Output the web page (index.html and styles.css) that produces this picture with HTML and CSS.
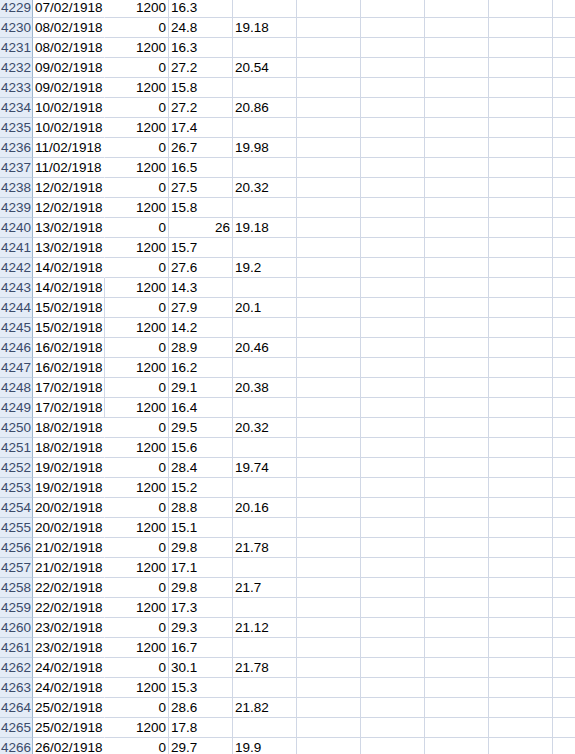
FILE: index.html
```html
<!DOCTYPE html>
<html>
<head>
    <meta charset="UTF-8">
    <title>Sheet1</title>
    <link rel="stylesheet" href="styles.css">
</head>
<body>
    <div class="sheet">
        <div class="row"><span class="hd">4229</span><span class="a">07/02/1918</span><span class="num">1200</span><span>16.3</span><span></span><span></span><span></span><span></span><span></span><span></span></div>
        <div class="row"><span class="hd">4230</span><span class="a">08/02/1918</span><span class="num">0</span><span>24.8</span><span>19.18</span><span></span><span></span><span></span><span></span><span></span></div>
        <div class="row"><span class="hd">4231</span><span class="a">08/02/1918</span><span class="num">1200</span><span>16.3</span><span></span><span></span><span></span><span></span><span></span><span></span></div>
        <div class="row"><span class="hd">4232</span><span class="a">09/02/1918</span><span class="num">0</span><span>27.2</span><span>20.54</span><span></span><span></span><span></span><span></span><span></span></div>
        <div class="row"><span class="hd">4233</span><span class="a">09/02/1918</span><span class="num">1200</span><span>15.8</span><span></span><span></span><span></span><span></span><span></span><span></span></div>
        <div class="row"><span class="hd">4234</span><span class="a">10/02/1918</span><span class="num">0</span><span>27.2</span><span>20.86</span><span></span><span></span><span></span><span></span><span></span></div>
        <div class="row"><span class="hd">4235</span><span class="a">10/02/1918</span><span class="num">1200</span><span>17.4</span><span></span><span></span><span></span><span></span><span></span><span></span></div>
        <div class="row"><span class="hd">4236</span><span class="a">11/02/1918</span><span class="num">0</span><span>26.7</span><span>19.98</span><span></span><span></span><span></span><span></span><span></span></div>
        <div class="row"><span class="hd">4237</span><span class="a">11/02/1918</span><span class="num">1200</span><span>16.5</span><span></span><span></span><span></span><span></span><span></span><span></span></div>
        <div class="row"><span class="hd">4238</span><span class="a">12/02/1918</span><span class="num">0</span><span>27.5</span><span>20.32</span><span></span><span></span><span></span><span></span><span></span></div>
        <div class="row"><span class="hd">4239</span><span class="a">12/02/1918</span><span class="num">1200</span><span>15.8</span><span></span><span></span><span></span><span></span><span></span><span></span></div>
        <div class="row"><span class="hd">4240</span><span class="a">13/02/1918</span><span class="num">0</span><span class="num">26</span><span>19.18</span><span></span><span></span><span></span><span></span><span></span></div>
        <div class="row"><span class="hd">4241</span><span class="a">13/02/1918</span><span class="num">1200</span><span>15.7</span><span></span><span></span><span></span><span></span><span></span><span></span></div>
        <div class="row"><span class="hd">4242</span><span class="a">14/02/1918</span><span class="num">0</span><span>27.6</span><span>19.2</span><span></span><span></span><span></span><span></span><span></span></div>
        <div class="row"><span class="hd">4243</span><span class="a ruled">14/02/1918</span><span class="num">1200</span><span>14.3</span><span></span><span></span><span></span><span></span><span></span><span></span></div>
        <div class="row"><span class="hd">4244</span><span class="a ruled">15/02/1918</span><span class="num">0</span><span>27.9</span><span>20.1</span><span></span><span></span><span></span><span></span><span></span></div>
        <div class="row"><span class="hd">4245</span><span class="a ruled">15/02/1918</span><span class="num">1200</span><span>14.2</span><span></span><span></span><span></span><span></span><span></span><span></span></div>
        <div class="row"><span class="hd">4246</span><span class="a ruled">16/02/1918</span><span class="num">0</span><span>28.9</span><span>20.46</span><span></span><span></span><span></span><span></span><span></span></div>
        <div class="row"><span class="hd">4247</span><span class="a ruled">16/02/1918</span><span class="num">1200</span><span>16.2</span><span></span><span></span><span></span><span></span><span></span><span></span></div>
        <div class="row"><span class="hd">4248</span><span class="a ruled">17/02/1918</span><span class="num">0</span><span>29.1</span><span>20.38</span><span></span><span></span><span></span><span></span><span></span></div>
        <div class="row"><span class="hd">4249</span><span class="a ruled">17/02/1918</span><span class="num">1200</span><span>16.4</span><span></span><span></span><span></span><span></span><span></span><span></span></div>
        <div class="row"><span class="hd">4250</span><span class="a">18/02/1918</span><span class="num">0</span><span>29.5</span><span>20.32</span><span></span><span></span><span></span><span></span><span></span></div>
        <div class="row"><span class="hd">4251</span><span class="a">18/02/1918</span><span class="num">1200</span><span>15.6</span><span></span><span></span><span></span><span></span><span></span><span></span></div>
        <div class="row"><span class="hd">4252</span><span class="a">19/02/1918</span><span class="num">0</span><span>28.4</span><span>19.74</span><span></span><span></span><span></span><span></span><span></span></div>
        <div class="row"><span class="hd">4253</span><span class="a">19/02/1918</span><span class="num">1200</span><span>15.2</span><span></span><span></span><span></span><span></span><span></span><span></span></div>
        <div class="row"><span class="hd">4254</span><span class="a">20/02/1918</span><span class="num">0</span><span>28.8</span><span>20.16</span><span></span><span></span><span></span><span></span><span></span></div>
        <div class="row"><span class="hd">4255</span><span class="a">20/02/1918</span><span class="num">1200</span><span>15.1</span><span></span><span></span><span></span><span></span><span></span><span></span></div>
        <div class="row"><span class="hd">4256</span><span class="a">21/02/1918</span><span class="num">0</span><span>29.8</span><span>21.78</span><span></span><span></span><span></span><span></span><span></span></div>
        <div class="row"><span class="hd">4257</span><span class="a">21/02/1918</span><span class="num">1200</span><span>17.1</span><span></span><span></span><span></span><span></span><span></span><span></span></div>
        <div class="row"><span class="hd">4258</span><span class="a">22/02/1918</span><span class="num">0</span><span>29.8</span><span>21.7</span><span></span><span></span><span></span><span></span><span></span></div>
        <div class="row"><span class="hd">4259</span><span class="a">22/02/1918</span><span class="num">1200</span><span>17.3</span><span></span><span></span><span></span><span></span><span></span><span></span></div>
        <div class="row"><span class="hd">4260</span><span class="a">23/02/1918</span><span class="num">0</span><span>29.3</span><span>21.12</span><span></span><span></span><span></span><span></span><span></span></div>
        <div class="row"><span class="hd">4261</span><span class="a">23/02/1918</span><span class="num">1200</span><span>16.7</span><span></span><span></span><span></span><span></span><span></span><span></span></div>
        <div class="row"><span class="hd">4262</span><span class="a">24/02/1918</span><span class="num">0</span><span>30.1</span><span>21.78</span><span></span><span></span><span></span><span></span><span></span></div>
        <div class="row"><span class="hd">4263</span><span class="a">24/02/1918</span><span class="num">1200</span><span>15.3</span><span></span><span></span><span></span><span></span><span></span><span></span></div>
        <div class="row"><span class="hd">4264</span><span class="a">25/02/1918</span><span class="num">0</span><span>28.6</span><span>21.82</span><span></span><span></span><span></span><span></span><span></span></div>
        <div class="row"><span class="hd">4265</span><span class="a">25/02/1918</span><span class="num">1200</span><span>17.8</span><span></span><span></span><span></span><span></span><span></span><span></span></div>
        <div class="row"><span class="hd">4266</span><span class="a">26/02/1918</span><span class="num">0</span><span>29.7</span><span>19.9</span><span></span><span></span><span></span><span></span><span></span></div>
    </div>
</body>
</html>
```
FILE: styles.css
```css
html, body {
    margin: 0;
    padding: 0;
    background: #fff;
    overflow: hidden;
}
body {
    font-family: 'Liberation Sans', Arial, sans-serif;
    font-size: 13.5px;
    color: #000;
}
.sheet {
    margin-top: -2px;
    width: 575px;
    overflow: hidden;
}
.row {
    display: grid;
    grid-template-columns: 33px 72px repeat(8, 64px);
    height: 20px;
}
.row span {
    box-sizing: border-box;
    height: 20px;
    padding: 1px 2px 0 2px;
    line-height: 18px;
    white-space: nowrap;
    overflow: hidden;
    border-right: 1px solid #d0d7e5;
    border-bottom: 1px solid #d0d7e5;
}
.row span.hd {
    background: #e4ecf7;
    color: #3a4b6a;
    text-align: center;
    padding: 1px 0 0 0;
    border-right-color: #9eb6ce;
    border-bottom-color: #c5d3e4;
}
.row span.a {
    border-right-color: #fff;
}
.row span.a.ruled {
    border-right-color: #d0d7e5;
}
.row span.num {
    text-align: right;
}
```
